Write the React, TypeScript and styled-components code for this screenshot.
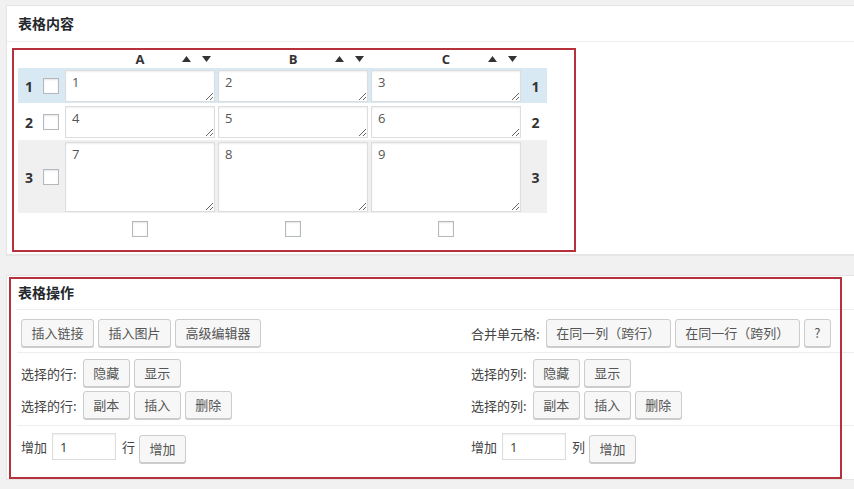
import React from "react";
import styled, { createGlobalStyle } from "styled-components";

const GlobalStyle = createGlobalStyle`
  html, body { margin: 0; padding: 0; }
  body {
    background: #f1f1f1;
    overflow: hidden;
    font-family: "Open Sans", "Noto Sans CJK SC", sans-serif;
    font-size: 13px;
    color: #444;
  }
`;

// layout
const Page = styled.div`
  display: flex;
  flex-direction: column;
  gap: 20px;
  padding: 5px 0 0 6px;
`;

const Panel = styled.section`
  position: relative;
  width: 920px;
  background: #fff;
  border: 1px solid #e5e5e5;
  box-shadow: 0 1px 1px rgba(0, 0, 0, 0.04);
`;

const PanelTitle = styled.h2<{ $inset?: boolean }>`
  margin: 0 ${(p) => (p.$inset ? "9px" : "0")};
  padding: 0 ${(p) => (p.$inset ? "2px" : "11px")};
  height: ${(p) => (p.$inset ? "33px" : "35px")};
  line-height: ${(p) => (p.$inset ? "33px" : "35px")};
  font-size: 14px;
  font-weight: 700;
  color: #23282d;
  border-bottom: 1px solid #eee;
  font-family: "Noto Sans CJK SC", sans-serif;
`;

const PanelBody = styled.div`
  padding: 6px 0 2px 5px;
`;

// annotation frame drawn over the operations panel
const Highlight = styled.div`
  position: absolute;
  top: 1px;
  left: 2px;
  width: 833px;
  height: 202px;
  box-sizing: border-box;
  border: 2px solid #b5323d;
  pointer-events: none;
`;

// table editor
const TableFrame = styled.div`
  width: 564px;
  box-sizing: border-box;
  border: 2px solid #b5323d;
  padding: 0 4px 13px 4px;
`;

const GRID = "22px 19px 150px 150px 150px 23px";

const HeadRow = styled.div`
  display: grid;
  grid-template-columns: ${GRID};
  column-gap: 3px;
  width: max-content;
  height: 18px;
  align-items: center;
`;

const HeadCell = styled.div`
  display: grid;
  grid-template-columns: 1fr auto 1fr;
  align-items: center;
  font-weight: 700;
  font-size: 13px;
  color: #333;
`;

const Sorts = styled.span`
  justify-self: end;
  display: flex;
  gap: 11px;
  padding-right: 4px;
`;

const Row = styled.div<{ $tone: "blue" | "plain" | "gray" }>`
  display: grid;
  grid-template-columns: ${GRID};
  column-gap: 3px;
  width: max-content;
  align-items: center;
  padding: 2px 0 1px;
  background: ${(p) =>
    p.$tone === "blue" ? "#d9e9f3" : p.$tone === "gray" ? "#f0f0f0" : "transparent"};
  & + & { margin-top: 1px; }
`;

const RowNum = styled.span`
  text-align: center;
  font-weight: 700;
  font-size: 14px;
  color: #333;
`;

const Check = styled.input.attrs({ type: "checkbox" })`
  appearance: none;
  margin: 0;
  width: 16px;
  height: 16px;
  box-sizing: border-box;
  border: 1px solid #b4b9be;
  background: #fff;
  box-shadow: inset 0 1px 2px rgba(0, 0, 0, 0.1);
`;

const Cell = styled.textarea<{ $tall?: boolean }>`
  display: block;
  width: 150px;
  height: ${(p) => (p.$tall ? "70px" : "32px")};
  box-sizing: border-box;
  margin: 0;
  padding: 2px 6px;
  border: 1px solid #ddd;
  box-shadow: inset 0 1px 2px rgba(0, 0, 0, 0.07);
  font-family: "Open Sans", sans-serif;
  font-size: 13px;
  line-height: 18px;
  color: #555;
  resize: both;
  overflow: hidden;
`;

const FootRow = styled.div`
  display: grid;
  grid-template-columns: ${GRID};
  column-gap: 3px;
  width: max-content;
  padding-top: 8px;
  justify-items: center;
`;

// operations
const Section = styled.div<{ $pad: string; $last?: boolean }>`
  margin: 0 10px;
  display: grid;
  grid-template-columns: 450px 450px;
  padding: ${(p) => p.$pad};
  border-bottom: ${(p) => (p.$last ? "none" : "1px solid #eee")};
`;

const Stack = styled.div`
  display: flex;
  flex-direction: column;
  gap: 4px;
`;

const Line = styled.div`
  display: flex;
  align-items: center;
  gap: 4px;
`;

const Label = styled.span`
  margin-right: 2px;
  font-family: "Noto Sans CJK SC", sans-serif;
  font-size: 13px;
  color: #444;
  white-space: nowrap;
`;

const Button = styled.button`
  height: 28px;
  box-sizing: border-box;
  padding: 0 9.5px;
  margin: 0;
  border: 1px solid #ccc;
  border-radius: 3px;
  background: #f7f7f7;
  box-shadow: 0 1px 0 #ccc;
  color: #555;
  font-family: "Noto Sans CJK SC", sans-serif;
  font-size: 13px;
  line-height: 26px;
  white-space: nowrap;
`;

const AddLine = styled.div`
  display: flex;
  align-items: flex-start;
`;

const AddText = styled.span<{ $l: number; $r: number }>`
  margin: 0 ${(p) => p.$r}px 0 ${(p) => p.$l}px;
  line-height: 27px;
  font-family: "Noto Sans CJK SC", sans-serif;
  color: #444;
`;

const Count = styled.input`
  width: 64px;
  height: 27px;
  box-sizing: border-box;
  margin: 0;
  padding: 0 7px;
  border: 1px solid #ddd;
  box-shadow: inset 0 1px 2px rgba(0, 0, 0, 0.07);
  font-family: "Open Sans", sans-serif;
  font-size: 13px;
  color: #32373c;
`;

const AddButton = styled(Button)`
  margin-top: 2px;
`;

function Arrow({ up }: { up?: boolean }) {
  return (
    <svg width="9" height="6" viewBox="0 0 9 6">
      <path d={up ? "M0 6 L4.5 0 L9 6 Z" : "M0 0 L9 0 L4.5 6 Z"} fill="#333" />
    </svg>
  );
}

const rows = [
  { n: 1, tone: "blue" as const, cells: ["1", "2", "3"], tall: false },
  { n: 2, tone: "plain" as const, cells: ["4", "5", "6"], tall: false },
  { n: 3, tone: "gray" as const, cells: ["7", "8", "9"], tall: true },
];

export default function App() {
  return (
    <>
      <GlobalStyle />
      <Page>
        <Panel>
          <PanelTitle>表格内容</PanelTitle>
          <PanelBody>
            <TableFrame>
              <HeadRow>
                <span />
                <span />
                {["A", "B", "C"].map((c) => (
                  <HeadCell key={c}>
                    <span />
                    <span>{c}</span>
                    <Sorts>
                      <Arrow up />
                      <Arrow />
                    </Sorts>
                  </HeadCell>
                ))}
                <span />
              </HeadRow>
              {rows.map((r) => (
                <Row key={r.n} $tone={r.tone}>
                  <RowNum>{r.n}</RowNum>
                  <Check />
                  {r.cells.map((v) => (
                    <Cell key={v} defaultValue={v} $tall={r.tall} />
                  ))}
                  <RowNum>{r.n}</RowNum>
                </Row>
              ))}
              <FootRow>
                <span />
                <span />
                <Check />
                <Check />
                <Check />
                <span />
              </FootRow>
            </TableFrame>
          </PanelBody>
        </Panel>

        <Panel>
          <PanelTitle $inset>表格操作</PanelTitle>
          <Section $pad="9px 4px 5px">
            <Line>
              <Button>插入链接</Button>
              <Button>插入图片</Button>
              <Button>高级编辑器</Button>
            </Line>
            <Line>
              <Label>合并单元格:</Label>
              <Button>在同一列（跨行）</Button>
              <Button>在同一行（跨列）</Button>
              <Button>?</Button>
            </Line>
          </Section>
          <Section $pad="6px 4px 6px">
            <Stack>
              <Line>
                <Label>选择的行:</Label>
                <Button>隐藏</Button>
                <Button>显示</Button>
              </Line>
              <Line>
                <Label>选择的行:</Label>
                <Button>副本</Button>
                <Button>插入</Button>
                <Button>删除</Button>
              </Line>
            </Stack>
            <Stack>
              <Line>
                <Label>选择的列:</Label>
                <Button>隐藏</Button>
                <Button>显示</Button>
              </Line>
              <Line>
                <Label>选择的列:</Label>
                <Button>副本</Button>
                <Button>插入</Button>
                <Button>删除</Button>
              </Line>
            </Stack>
          </Section>
          <Section $pad="7px 4px 16px" $last>
            <AddLine>
              <AddText $l={0} $r={5}>增加</AddText>
              <Count defaultValue="1" />
              <AddText $l={6} $r={4}>行</AddText>
              <AddButton>增加</AddButton>
            </AddLine>
            <AddLine>
              <AddText $l={0} $r={5}>增加</AddText>
              <Count defaultValue="1" />
              <AddText $l={6} $r={4}>列</AddText>
              <AddButton>增加</AddButton>
            </AddLine>
          </Section>
          <Highlight />
        </Panel>
      </Page>
    </>
  );
}
